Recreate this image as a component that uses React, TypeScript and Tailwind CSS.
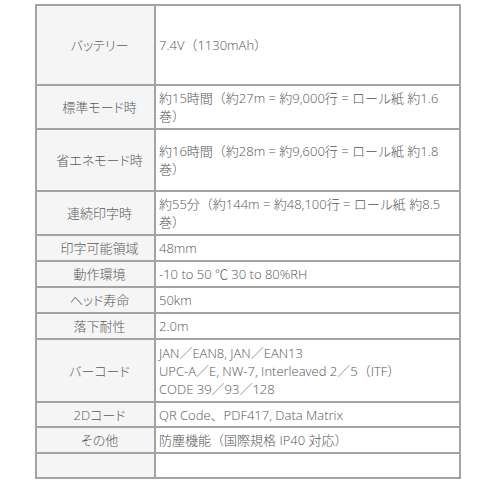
type Row = {
  label: string;
  value: React.ReactNode;
  h: string;
};

const rows: Row[] = [
  { label: "バッテリー", value: "7.4V（1130mAh）", h: "h-[78px]" },
  {
    label: "標準モード時",
    value: (
      <>
        約15時間（約27m = 約9,000行 = ロール紙 約1.6
        <br />
        巻）
      </>
    ),
    h: "h-[44px]",
  },
  {
    label: "省エネモード時",
    value: (
      <>
        約16時間（約28m = 約9,600行 = ロール紙 約1.8
        <br />
        巻）
      </>
    ),
    h: "h-[62px]",
  },
  {
    label: "連続印字時",
    value: (
      <>
        約55分（約144m = 約48,100行 = ロール紙 約8.5
        <br />
        巻）
      </>
    ),
    h: "h-[44px]",
  },
  { label: "印字可能領域", value: "48mm", h: "h-[26px]" },
  { label: "動作環境", value: "-10 to 50 ℃ 30 to 80%RH", h: "h-[26px]" },
  { label: "ヘッド寿命", value: "50km", h: "h-[26px]" },
  { label: "落下耐性", value: "2.0m", h: "h-[26px]" },
  {
    label: "バーコード",
    value: (
      <>
        JAN／EAN8, JAN／EAN13
        <br />
        UPC-A／E, NW-7, Interleaved 2／5（ITF）
        <br />
        CODE 39／93／128
      </>
    ),
    h: "h-[63px]",
  },
  { label: "2Dコード", value: "QR Code、PDF417, Data Matrix", h: "h-[25px]" },
  { label: "その他", value: "防塵機能（国際規格 IP40 対応）", h: "h-[26px]" },
  { label: "", value: "", h: "h-[25px]" },
];

export default function App() {
  return (
    <div className="min-h-[500px] bg-white pl-[35px] pt-[4px] font-['Open_Sans','Noto_Sans_CJK_JP',sans-serif] text-[13px] font-light leading-[18px] text-[#555]">
      <div className="w-[426px] border-2 border-[#a3a3a3]">
        {rows.map((row, i) => (
          <div
            key={i}
            className={`flex ${row.h} ${i > 0 ? "border-t-2 border-[#a3a3a3]" : ""}`}
          >
            <div className="flex w-[119px] shrink-0 items-center justify-center border-r-2 border-[#a3a3a3] bg-[#f5f5f5] pl-2 text-[#5a5a5a] [font-feature-settings:'palt']">
              {row.label}
            </div>
            <div className="flex flex-1 items-center pl-[3px] whitespace-nowrap">
              <div>{row.value}</div>
            </div>
          </div>
        ))}
      </div>
    </div>
  );
}
